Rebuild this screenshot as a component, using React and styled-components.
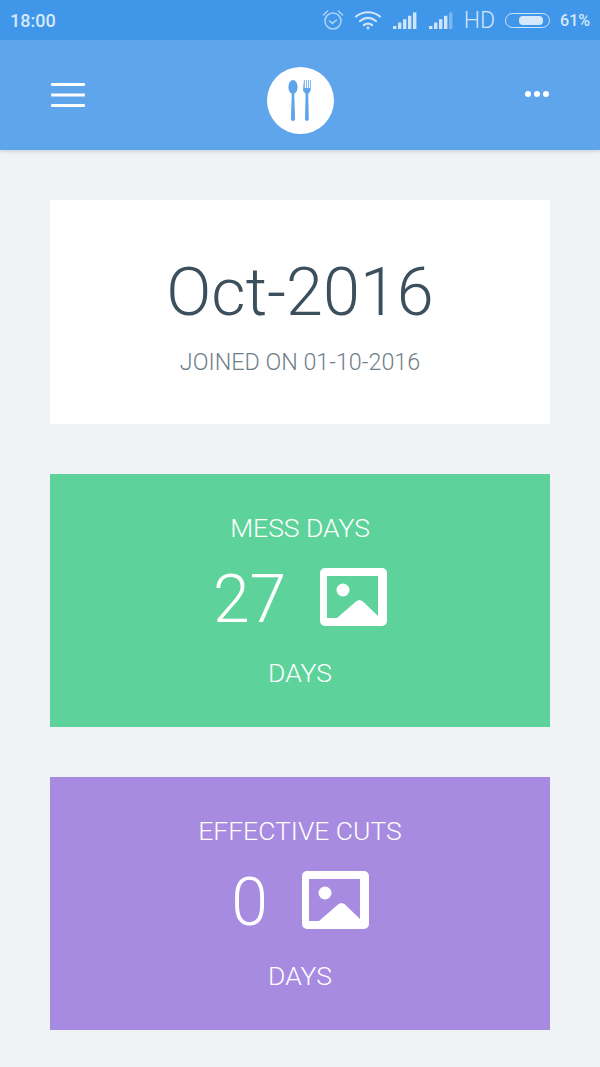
import React from 'react';
import styled, { createGlobalStyle } from 'styled-components';

const Global = createGlobalStyle`
  html, body {
    margin: 0;
    padding: 0;
    background: #eff3f5;
    font-family: Roboto, "Liberation Sans", sans-serif;
  }
`;

const AlarmIcon = () => (
  <svg width="22" height="22" viewBox="0 0 22 22" fill="none" stroke="#a9d2f6" strokeWidth="1.6">
    <circle cx="11" cy="12" r="8" />
    <path d="M7.5 12l3 2.4 4-3.4" strokeLinecap="round" />
    <path d="M1.5 6 L5.5 2 M20.5 6 L16.5 2" strokeLinecap="round" />
  </svg>
);

const WifiIcon = () => (
  <svg width="28" height="20" viewBox="0 0 28 20" fill="none" stroke="#cfe5fa" strokeWidth="2.2" strokeLinecap="round">
    <path d="M2 6.5C9 .8 19 .8 26 6.5" />
    <path d="M6 11C11 7 17 7 22 11" />
    <path d="M10 15c2.4-1.7 5.6-1.7 8 0" />
    <circle cx="14" cy="18" r="1.4" fill="#cfe5fa" stroke="none" />
  </svg>
);

const SignalIcon = ({ level }) => (
  <svg width="26" height="18" viewBox="0 0 26 18">
    {[0, 1, 2, 3, 4].map(i => (
      <rect
        key={i}
        x={1 + i * 5}
        y={15 - i * 3.4}
        width="3.4"
        height={3 + i * 3.4}
        fill={i < level ? '#cfe5fa' : '#7db6ee'}
      />
    ))}
  </svg>
);

const MenuIcon = () => (
  <svg width="34" height="26" viewBox="0 0 34 26" fill="#fff">
    <rect y="1" width="34" height="3" rx="1" />
    <rect y="11.5" width="34" height="3" rx="1" />
    <rect y="22" width="34" height="3" rx="1" />
  </svg>
);

const CutleryIcon = () => (
  <svg width="24" height="41" viewBox="0 0 24 41" fill="#5fa5ec">
    <ellipse cx="5" cy="7" rx="4.6" ry="7" />
    <path d="M3.8 13h2.4l.9 26c0 2.6-4.2 2.6-4.2 0z" />
    <path d="M16 0h.8v8h1.2V0h.8v8h1.2V0h.8v8h1.2V0h.8v9.500c0 2.500-2.200 3-2.600 4.500l.6 25c0 2.600-3.800 2.600-3.800 0l.6-25c-.4-1.500-2.600-2-2.600-4.500z" />
  </svg>
);

const PictureIcon = () => (
  <svg width="67" height="58" viewBox="0 0 67 58">
    <path
      fill="#fff"
      fillRule="evenodd"
      d="M5 0h57a5 5 0 0 1 5 5v48a5 5 0 0 1-5 5H5a5 5 0 0 1-5-5V5a5 5 0 0 1 5-5zM7 8v42h10l19-16.500c2.500-2 4.500-2 7 0l15 14.500V8z"
    />
    <circle cx="23" cy="22" r="6.5" fill="#fff" />
  </svg>
);

const DaysCard = ({ color, title, count }) => (
  <StatCard $color={color}>
    <StatTitle>{title}</StatTitle>
    <StatRow>
      <StatCount>{count}</StatCount>
      <PictureIcon />
    </StatRow>
    <StatTitle>DAYS</StatTitle>
  </StatCard>
);

const App = () => (
  <Page>
    <Global />
    <StatusBar>
      <Clock>18:00</Clock>
      <StatusIcons>
        <AlarmIcon />
        <WifiIcon />
        <SignalIcon level={5} />
        <SignalIcon level={4} />
        <Network>HD</Network>
        <Battery>
          <BatteryFill />
        </Battery>
        <Percent>61%</Percent>
      </StatusIcons>
    </StatusBar>
    <Header>
      <MenuIcon />
      <Logo>
        <CutleryIcon />
      </Logo>
      <Dots>
        <Dot />
        <Dot />
        <Dot />
      </Dots>
    </Header>
    <Content>
      <JoinCard>
        <Month>Oct-2016</Month>
        <Joined>JOINED ON 01-10-2016</Joined>
      </JoinCard>
      <DaysCard color="#5dd39b" title="MESS DAYS" count="27" />
      <DaysCard color="#a78be0" title="EFFECTIVE CUTS" count="0" />
    </Content>
  </Page>
);

const Page = styled.div`
  width: 600px;
  height: 1067px;
  overflow: hidden;
  background: #eff3f5;
`;

const StatusBar = styled.div`
  height: 40px;
  padding: 0 10px;
  box-sizing: border-box;
  display: flex;
  align-items: center;
  justify-content: space-between;
  background: #4096e8;
`;

const Clock = styled.span`
  font-size: 18px;
  font-weight: 500;
  color: #d6e9fb;
`;

const StatusIcons = styled.div`
  display: flex;
  align-items: center;
  gap: 10px;
`;

const Network = styled.span`
  font-size: 23px;
  font-weight: 300;
  color: #cfe5fa;
`;

const Battery = styled.div`
  width: 45px;
  height: 15px;
  box-sizing: border-box;
  padding: 2px;
  border: 1.5px solid #cfe5fa;
  border-radius: 8px;
  display: flex;
`;

const BatteryFill = styled.div`
  width: 61%;
  margin-left: 11px;
  background: #d6e9fb;
  border-radius: 4px;
`;

const Percent = styled.span`
  font-size: 16px;
  font-weight: 500;
  color: #d6e9fb;
`;

const Header = styled.div`
  height: 110px;
  padding: 0 51px;
  box-sizing: border-box;
  display: grid;
  grid-template-columns: 1fr auto 1fr;
  align-items: center;
  background: #5fa5ec;
  box-shadow: 0 2px 3px rgba(60, 90, 120, 0.18);
`;

const Logo = styled.div`
  width: 67px;
  height: 67px;
  margin-top: 11px;
  border-radius: 50%;
  background: #fff;
  display: flex;
  align-items: center;
  justify-content: center;
`;

const Dots = styled.div`
  display: flex;
  justify-content: flex-end;
  gap: 3px;
  margin-top: -2px;
`;

const Dot = styled.span`
  width: 6px;
  height: 6px;
  border-radius: 50%;
  background: #fff;
`;

const Content = styled.div`
  padding: 50px 50px 0;
  display: flex;
  flex-direction: column;
  gap: 50px;
`;

const JoinCard = styled.div`
  height: 224px;
  box-sizing: border-box;
  padding-top: 52px;
  background: #fff;
  text-align: center;
`;

const Month = styled.div`
  font-size: 66.5px;
  font-weight: 300;
  line-height: 80px;
  color: #3c4f5c;
`;

const Joined = styled.div`
  margin-top: 16px;
  font-size: 23.3px;
  font-weight: 300;
  color: #6f7f8a;
`;

const StatCard = styled.div`
  height: 253px;
  box-sizing: border-box;
  padding-top: 39px;
  background: ${p => p.$color};
  color: #fff;
  display: flex;
  flex-direction: column;
  align-items: center;
`;

const StatTitle = styled.div`
  font-size: 26.5px;
  font-weight: 300;
  line-height: 30px;
`;

const StatRow = styled.div`
  height: 84px;
  margin: 12px 0 19px;
  display: flex;
  align-items: center;
  gap: 34px;
`;

const StatCount = styled.div`
  position: relative;
  top: 3px;
  font-size: 66px;
  font-weight: 300;
  line-height: 84px;
`;

export default App;
